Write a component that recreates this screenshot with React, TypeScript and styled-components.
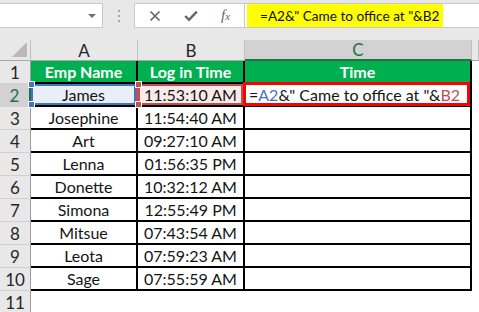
import React from "react";
import styled, { createGlobalStyle, css } from "styled-components";

const GlobalStyle = createGlobalStyle`
  html, body {
    margin: 0;
    padding: 0;
    background: #ffffff;
  }
  body {
    font-family: Lato, "Liberation Sans", sans-serif;
    overflow: hidden;
  }
`;

const Page = styled.div`
  width: 479px;
  height: 312px;
  overflow: hidden;
  background: #ffffff;
`;

const Toolbar = styled.div`
  height: 40px;
  box-sizing: border-box;
  display: flex;
  align-items: flex-start;
  padding-top: 3px;
  background: #e8e8e8;
`;

const NameBox = styled.div`
  width: 103px;
  height: 25px;
  box-sizing: border-box;
  background: #ffffff;
  border: 1px solid #c8c8c8;
  border-left: none;
  display: flex;
  align-items: center;
  justify-content: flex-end;
  padding-right: 6px;
`;

const DropArrow = styled.span`
  width: 0;
  height: 0;
  border-left: 4px solid transparent;
  border-right: 4px solid transparent;
  border-top: 4px solid #707070;
`;

const Grip = styled.div`
  width: 31px;
  height: 25px;
  display: flex;
  flex-direction: column;
  align-items: center;
  justify-content: center;
  gap: 3px;
`;

const GripDot = styled.span`
  width: 2px;
  height: 2px;
  background: #a6a6a6;
`;

const ButtonBox = styled.div`
  width: 111px;
  height: 25px;
  box-sizing: border-box;
  background: #ffffff;
  border: 1px solid #c8c8c8;
  display: flex;
  align-items: center;
  padding-left: 13px;
  gap: 22px;
`;

const IconSlot = styled.span`
  width: 14px;
  height: 14px;
  display: flex;
  align-items: center;
  justify-content: center;
  color: #666666;
`;

const Fx = styled.span`
  font-family: "Liberation Serif", serif;
  font-style: italic;
  font-size: 15px;
  color: #666666;
  margin-left: 1px;

  & small {
    font-size: 11px;
  }
`;

const FormulaInput = styled.div`
  flex: 1;
  height: 25px;
  box-sizing: border-box;
  background: #ffffff;
  border-top: 1px solid #c8c8c8;
  border-bottom: 1px solid #c8c8c8;
  padding-left: 2px;
  display: flex;
`;

const Highlight = styled.div`
  width: 196px;
  height: 100%;
  background: #ffff00;
  display: flex;
  align-items: center;
  padding-left: 13px;
  box-sizing: border-box;
  font-size: 13.6px;
  color: #111111;
  white-space: nowrap;
`;

const Sheet = styled.div`
  display: grid;
  grid-template-columns: 31px 107px 107px 227px 1fr;
  grid-template-rows: 21px repeat(11, 23px);
  font-size: 16px;
  color: #141414;
`;

const Corner = styled.div`
  background: #e8e8e8;
  border-right: 1px solid #c0c0c0;
  border-bottom: 1px solid #a8a8a8;
  box-sizing: border-box;
  display: flex;
  align-items: flex-end;
  justify-content: flex-end;
  padding: 0 3px 3px 0;
`;

const ColHeader = styled.div<{ $selected?: boolean }>`
  background: #e8e8e8;
  box-sizing: border-box;
  border-right: 1px solid #c0c0c0;
  border-bottom: 1px solid #a8a8a8;
  display: flex;
  align-items: center;
  justify-content: center;
  font-size: 17px;
  color: #262626;
  ${(p) =>
    p.$selected &&
    css`
      background: #d2d2d2;
      color: #217346;
      border-bottom: 2px solid #217346;
    `}
`;

const RowHeader = styled.div<{ $selected?: boolean }>`
  background: #e8e8e8;
  box-sizing: border-box;
  border-right: 1px solid #9c9c9c;
  border-bottom: 1px solid #d0d0d0;
  display: flex;
  align-items: center;
  justify-content: center;
  font-size: 17px;
  color: #262626;
  ${(p) =>
    p.$selected &&
    css`
      background: #d2d2d2;
      color: #217346;
      border-right: 2px solid #217346;
    `}
`;

type CellKind = "title" | "plain" | "refA" | "refB" | "active" | "empty";

const Cell = styled.div<{ $kind: CellKind }>`
  position: relative;
  box-sizing: border-box;
  display: flex;
  align-items: center;
  justify-content: center;
  white-space: nowrap;
  border-right: 2px solid #000000;
  border-bottom: 2px solid #000000;
  background: #ffffff;

  ${(p) =>
    p.$kind === "title" &&
    css`
      background: #00b050;
      color: #ffffff;
      font-weight: 700;
    `}
  ${(p) =>
    p.$kind === "refA" &&
    css`
      background: #e9eff8;
      box-shadow: inset 0 0 0 2px #4472c4;
      border-right-color: #c0504d;
    `}
  ${(p) =>
    p.$kind === "refB" &&
    css`
      background: #fbeaea;
      box-shadow: inset 0 0 0 2px #c0504d;
    `}
  ${(p) =>
    p.$kind === "active" &&
    css`
      justify-content: flex-start;
      padding-left: 4px;
      &::after {
        content: "";
        position: absolute;
        inset: -2px 0 -1px -2px;
        border: 3px solid #ff0000;
      }
    `}
  ${(p) =>
    p.$kind === "empty" &&
    css`
      border: none;
    `}
`;

const Handle = styled.span<{ $color: string; $bottom?: boolean }>`
  position: absolute;
  left: -3px;
  ${(p) => (p.$bottom ? "bottom: -3px;" : "top: -3px;")}
  width: 5px;
  height: 5px;
  background: ${(p) => p.$color};
  border: 1px solid #ffffff;
  z-index: 2;
`;

const RefA = styled.span`
  color: #4472c4;
`;

const RefB = styled.span`
  color: #c0504d;
`;

const rows: [string, string][] = [
  ["James", "11:53:10 AM"],
  ["Josephine", "11:54:40 AM"],
  ["Art", "09:27:10 AM"],
  ["Lenna", "01:56:35 PM"],
  ["Donette", "10:32:12 AM"],
  ["Simona", "12:55:49 PM"],
  ["Mitsue", "07:43:54 AM"],
  ["Leota", "07:59:23 AM"],
  ["Sage", "07:55:59 AM"],
];

const CloseIcon = () => (
  <svg width="12" height="12" viewBox="0 0 12 12">
    <path d="M1.5 1.5 L10.5 10.5 M10.5 1.5 L1.5 10.5" stroke="currentColor" strokeWidth="1.7" fill="none" />
  </svg>
);

const CheckIcon = () => (
  <svg width="14" height="12" viewBox="0 0 14 12">
    <path d="M1.2 6 L5 9.8 L12.8 1.6" stroke="currentColor" strokeWidth="2.4" fill="none" />
  </svg>
);

export default function App() {
  return (
    <Page>
      <GlobalStyle />
      <Toolbar>
        <NameBox>
          <DropArrow />
        </NameBox>
        <Grip>
          <GripDot />
          <GripDot />
          <GripDot />
        </Grip>
        <ButtonBox>
          <IconSlot>
            <CloseIcon />
          </IconSlot>
          <IconSlot>
            <CheckIcon />
          </IconSlot>
          <Fx>
            f<small>x</small>
          </Fx>
        </ButtonBox>
        <FormulaInput>
          <Highlight>=A2&amp;" Came to office at "&amp;B2</Highlight>
        </FormulaInput>
      </Toolbar>

      <Sheet>
        <Corner>
          <svg width="15" height="15" viewBox="0 0 15 15">
            <polygon points="15,0 15,15 0,15" fill="#b9b9b9" />
          </svg>
        </Corner>
        <ColHeader>A</ColHeader>
        <ColHeader>B</ColHeader>
        <ColHeader $selected>C</ColHeader>
        <ColHeader />

        <RowHeader>1</RowHeader>
        <Cell $kind="title">Emp Name</Cell>
        <Cell $kind="title">Log in Time</Cell>
        <Cell $kind="title">Time</Cell>
        <Cell $kind="empty" />

        {rows.map(([name, time], i) => {
          const first = i === 0;
          return (
            <React.Fragment key={name}>
              <RowHeader $selected={first}>{i + 2}</RowHeader>
              <Cell $kind={first ? "refA" : "plain"}>
                {first && <Handle $color="#4472c4" />}
                {first && <Handle $color="#4472c4" $bottom />}
                {name}
              </Cell>
              <Cell $kind={first ? "refB" : "plain"}>
                {first && <Handle $color="#c0504d" />}
                {first && <Handle $color="#c0504d" $bottom />}
                {time}
              </Cell>
              {first ? (
                <Cell $kind="active">
                  =<RefA>A2</RefA>&amp;" Came to office at "&amp;<RefB>B2</RefB>
                </Cell>
              ) : (
                <Cell $kind="plain" />
              )}
              <Cell $kind="empty" />
            </React.Fragment>
          );
        })}

        <RowHeader>11</RowHeader>
        <Cell $kind="empty" />
        <Cell $kind="empty" />
        <Cell $kind="empty" />
        <Cell $kind="empty" />
      </Sheet>
    </Page>
  );
}
